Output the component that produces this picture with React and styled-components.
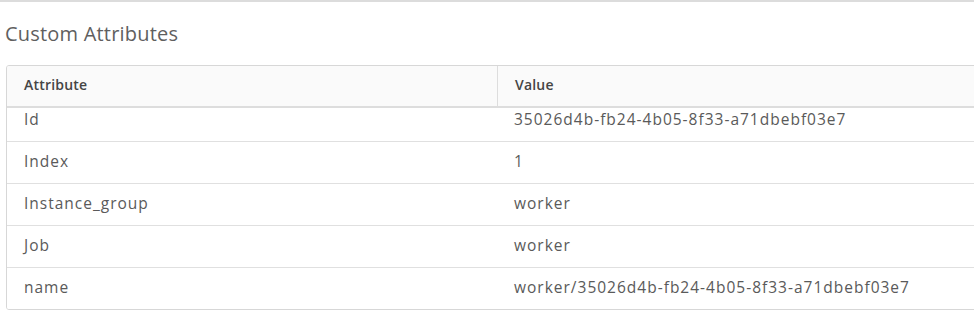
import React from 'react';
import styled, { createGlobalStyle } from 'styled-components';

const GlobalStyle = createGlobalStyle`
  html, body {
    margin: 0;
    padding: 0;
    background: #ffffff;
    overflow: hidden;
  }
  body {
    font-family: "Open Sans", Lato, "Liberation Sans", sans-serif;
    color: #565656;
  }
`;

const Page = styled.div`
  width: 974px;
  height: 310px;
  border-top: 2px solid #dcdcdc;
  box-sizing: border-box;
  overflow: hidden;
`;

const Title = styled.h3`
  margin: 0;
  padding: 20px 0 0 5px;
  height: 63px;
  box-sizing: border-box;
  font-size: 20px;
  font-weight: 400;
  line-height: 24px;
  letter-spacing: 0.2px;
  color: #5f5f5f;
`;

const Grid = styled.div`
  margin-left: 6px;
  width: 1000px;
  border: 1px solid #d7d7d7;
  border-radius: 3px;
  overflow: hidden;
`;

const Row = styled.div`
  display: grid;
  grid-template-columns: 490px 1fr;
  height: ${({ $height }) => $height || 42}px;
  border-bottom: ${({ $head }) => ($head ? '2px solid #dddddd' : '1px solid #e0e0e0')};
  background: ${({ $head }) => ($head ? '#fafafa' : '#ffffff')};
  box-sizing: border-box;
  &:last-child {
    border-bottom: none;
  }
`;

const Cell = styled.div`
  display: flex;
  align-items: ${({ $top }) => ($top ? 'flex-start' : 'center')};
  padding: 0 17px ${({ $top }) => ($top ? '0' : '3px')} 17px;
  font-size: ${({ $head }) => ($head ? '14px' : '15.5px')};
  font-weight: ${({ $head }) => ($head ? 600 : 400)};
  letter-spacing: ${({ $head }) => ($head ? '0.2px' : '1px')};
  color: ${({ $head }) => ($head ? '#454545' : '#5a5a5a')};
  border-left: ${({ $divider }) => ($divider ? '1px solid #dddddd' : 'none')};
  white-space: nowrap;
`;

const rows = [
  ['Id', '35026d4b-fb24-4b05-8f33-a71dbebf03e7'],
  ['Index', '1'],
  ['Instance_group', 'worker'],
  ['Job', 'worker'],
  ['name', 'worker/35026d4b-fb24-4b05-8f33-a71dbebf03e7'],
];

export default function App() {
  return (
    <Page>
      <GlobalStyle />
      <Title>Custom Attributes</Title>
      <Grid>
        <Row $head $height={42}>
          <Cell $head>Attribute</Cell>
          <Cell $head $divider>Value</Cell>
        </Row>
        {rows.map(([attr, value], i) => (
          <Row
            key={attr}
            $height={i === 0 ? 34 : i === rows.length - 1 ? 41 : 42}
          >
            <Cell $top={i === 0}>{attr}</Cell>
            <Cell $top={i === 0}>{value}</Cell>
          </Row>
        ))}
      </Grid>
    </Page>
  );
}
